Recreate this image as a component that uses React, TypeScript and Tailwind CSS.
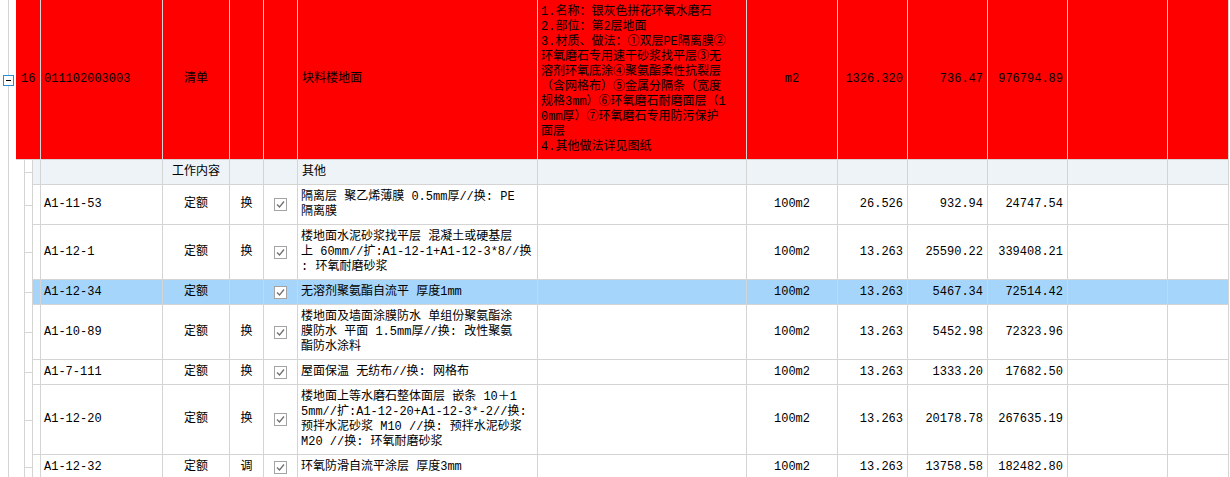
import React from 'react';

type Row = {
  code: string;
  mark: string;
  name: string[];
  qty: string;
  price: string;
  total: string;
  h: string;
  active?: boolean;
};

const rows: Row[] = [
  { code: 'A1-11-53', mark: '换', name: ['隔离层 聚乙烯薄膜 0.5mm厚//换: PE', '隔离膜'], qty: '26.526', price: '932.94', total: '24747.54', h: 'h-[40px]' },
  { code: 'A1-12-1', mark: '换', name: ['楼地面水泥砂浆找平层 混凝土或硬基层', '上 60mm//扩:A1-12-1+A1-12-3*8//换', ': 环氧耐磨砂浆'], qty: '13.263', price: '25590.22', total: '339408.21', h: 'h-[55px]' },
  { code: 'A1-12-34', mark: '', name: ['无溶剂聚氨酯自流平 厚度1mm'], qty: '13.263', price: '5467.34', total: '72514.42', h: 'h-[25px]', active: true },
  { code: 'A1-10-89', mark: '换', name: ['楼地面及墙面涂膜防水 单组份聚氨酯涂', '膜防水 平面 1.5mm厚//换: 改性聚氨', '酯防水涂料'], qty: '13.263', price: '5452.98', total: '72323.96', h: 'h-[55px]' },
  { code: 'A1-7-111', mark: '换', name: ['屋面保温 无纺布//换: 网格布'], qty: '13.263', price: '1333.20', total: '17682.50', h: 'h-[25px]' },
  { code: 'A1-12-20', mark: '换', name: ['楼地面上等水磨石整体面层 嵌条 10＋1', '5mm//扩:A1-12-20+A1-12-3*-2//换:', '预拌水泥砂浆 M10 //换: 预拌水泥砂浆', 'M20 //换: 环氧耐磨砂浆'], qty: '13.263', price: '20178.78', total: '267635.19', h: 'h-[70px]' },
  { code: 'A1-12-32', mark: '调', name: ['环氧防滑自流平涂层 厚度3mm'], qty: '13.263', price: '13758.58', total: '182482.80', h: 'h-[25px]' },
];

const desc = [
  '1.名称：银灰色拼花环氧水磨石',
  '2.部位：第2层地面',
  '3.材质、做法：①双层PE隔离膜②',
  '环氧磨石专用速干砂浆找平层③无',
  '溶剂环氧底涂④聚氨酯柔性抗裂层',
  '（含网格布）⑤金属分隔条（宽度',
  '规格3mm）⑥环氧磨石耐磨面层（1',
  '0mm厚）⑦环氧磨石专用防污保护',
  '面层',
  '4.其他做法详见图纸',
];

function Cell({ w, className = '', children }: { w: string; className?: string; children?: React.ReactNode }) {
  return (
    <div className={`${w} flex-none h-full flex items-center border-r border-[#d4d4d4] overflow-hidden whitespace-nowrap ${className}`}>
      {children}
    </div>
  );
}

function Check() {
  return (
    <div className="w-[13px] h-[13px] border border-[#a3a3a3] bg-white flex items-center justify-center">
      <svg width="11" height="11" viewBox="0 0 11 11">
        <polyline points="2,5.5 4.5,8 9,2.5" fill="none" stroke="#707070" strokeWidth="1.3" />
      </svg>
    </div>
  );
}

function Tree() {
  return (
    <div className="w-[32px] flex-none h-full flex">
      <div className="w-[8px]" />
      <div className="w-[16px] border-l border-[#d4d4d4]" />
      <div className="w-[8px] border-l border-[#d4d4d4] flex items-center">
        <div className="h-px w-full bg-[#d4d4d4]" />
      </div>
    </div>
  );
}

function Lines({ lines }: { lines: string[] }) {
  return (
    <div className="flex flex-col">
      {lines.map((l, i) => (
        <div key={i}>{l}</div>
      ))}
    </div>
  );
}

export default function App() {
  return (
    <div className="w-[1230px] h-[477px] overflow-hidden bg-white text-black text-[12px] leading-[15px] font-['Liberation_Mono','Noto_Sans_CJK_SC',monospace]">
      {/* bill row */}
      <div className="flex h-[160px]">
        <div className="w-[16px] flex-none h-full relative flex items-center">
          <div className="absolute left-[8px] top-0 bottom-0 w-px bg-[#d4d4d4]" />
          <div className="relative ml-[3px] w-[11px] h-[11px] border border-[#2b8fd8] bg-white flex items-center justify-center">
            <div className="w-[5px] h-px bg-black" />
          </div>
        </div>
        <div className="flex bg-[#ff0000] border-b border-[#d4d4d4] h-full">
          <Cell w="w-[25px]" className="pl-[5px]">16</Cell>
          <Cell w="w-[122px]" className="pl-[3px]">011102003003</Cell>
          <Cell w="w-[67px]" className="justify-center">清单</Cell>
          <Cell w="w-[34px]" />
          <Cell w="w-[34px]" />
          <Cell w="w-[240px]" className="pl-[4px]">块料楼地面</Cell>
          <Cell w="w-[209px]" className="pl-[3px]">
            <Lines lines={desc} />
          </Cell>
          <Cell w="w-[91px]" className="justify-center">m2</Cell>
          <Cell w="w-[70px]" className="justify-end pr-[4px]">1326.320</Cell>
          <Cell w="w-[80px]" className="justify-end pr-[4px]">736.47</Cell>
          <Cell w="w-[80px]" className="justify-end pr-[4px]">976794.89</Cell>
          <Cell w="w-[100px]" />
          <Cell w="w-[61px]" />
        </div>
      </div>

      {/* work content row */}
      <div className="flex h-[25px]">
        <Tree />
        <div className="flex bg-[#eef3f8] border-b border-[#d4d4d4] h-full">
          <Cell w="w-[9px]" className="border-l" />
          <Cell w="w-[122px]" />
          <Cell w="w-[67px]" className="justify-center">工作内容</Cell>
          <Cell w="w-[34px]" />
          <Cell w="w-[34px]" />
          <Cell w="w-[240px]" className="pl-[4px]">其他</Cell>
          <Cell w="w-[209px]" />
          <Cell w="w-[91px]" />
          <Cell w="w-[70px]" />
          <Cell w="w-[80px]" />
          <Cell w="w-[80px]" />
          <Cell w="w-[100px]" />
          <Cell w="w-[61px]" />
        </div>
      </div>

      {rows.map((r) => (
        <div key={r.code} className={`flex ${r.h}`}>
          <Tree />
          <div className={`flex border-b border-[#d4d4d4] h-full ${r.active ? 'bg-[#a6d5fb]' : 'bg-white'}`}>
            <Cell w="w-[9px]" className="border-l" />
            <Cell w="w-[122px]" className="pl-[3px]">{r.code}</Cell>
            <Cell w="w-[67px]" className="justify-center">定额</Cell>
            <Cell w="w-[34px]" className="justify-center">{r.mark}</Cell>
            <Cell w="w-[34px]" className="justify-center">
              <Check />
            </Cell>
            <Cell w="w-[240px]" className="pl-[3px]">
              <Lines lines={r.name} />
            </Cell>
            <Cell w="w-[209px]" />
            <Cell w="w-[91px]" className="justify-center">100m2</Cell>
            <Cell w="w-[70px]" className="justify-end pr-[4px]">{r.qty}</Cell>
            <Cell w="w-[80px]" className="justify-end pr-[4px]">{r.price}</Cell>
            <Cell w="w-[80px]" className="justify-end pr-[4px]">{r.total}</Cell>
            <Cell w="w-[100px]" />
            <Cell w="w-[61px]" />
          </div>
        </div>
      ))}
    </div>
  );
}
